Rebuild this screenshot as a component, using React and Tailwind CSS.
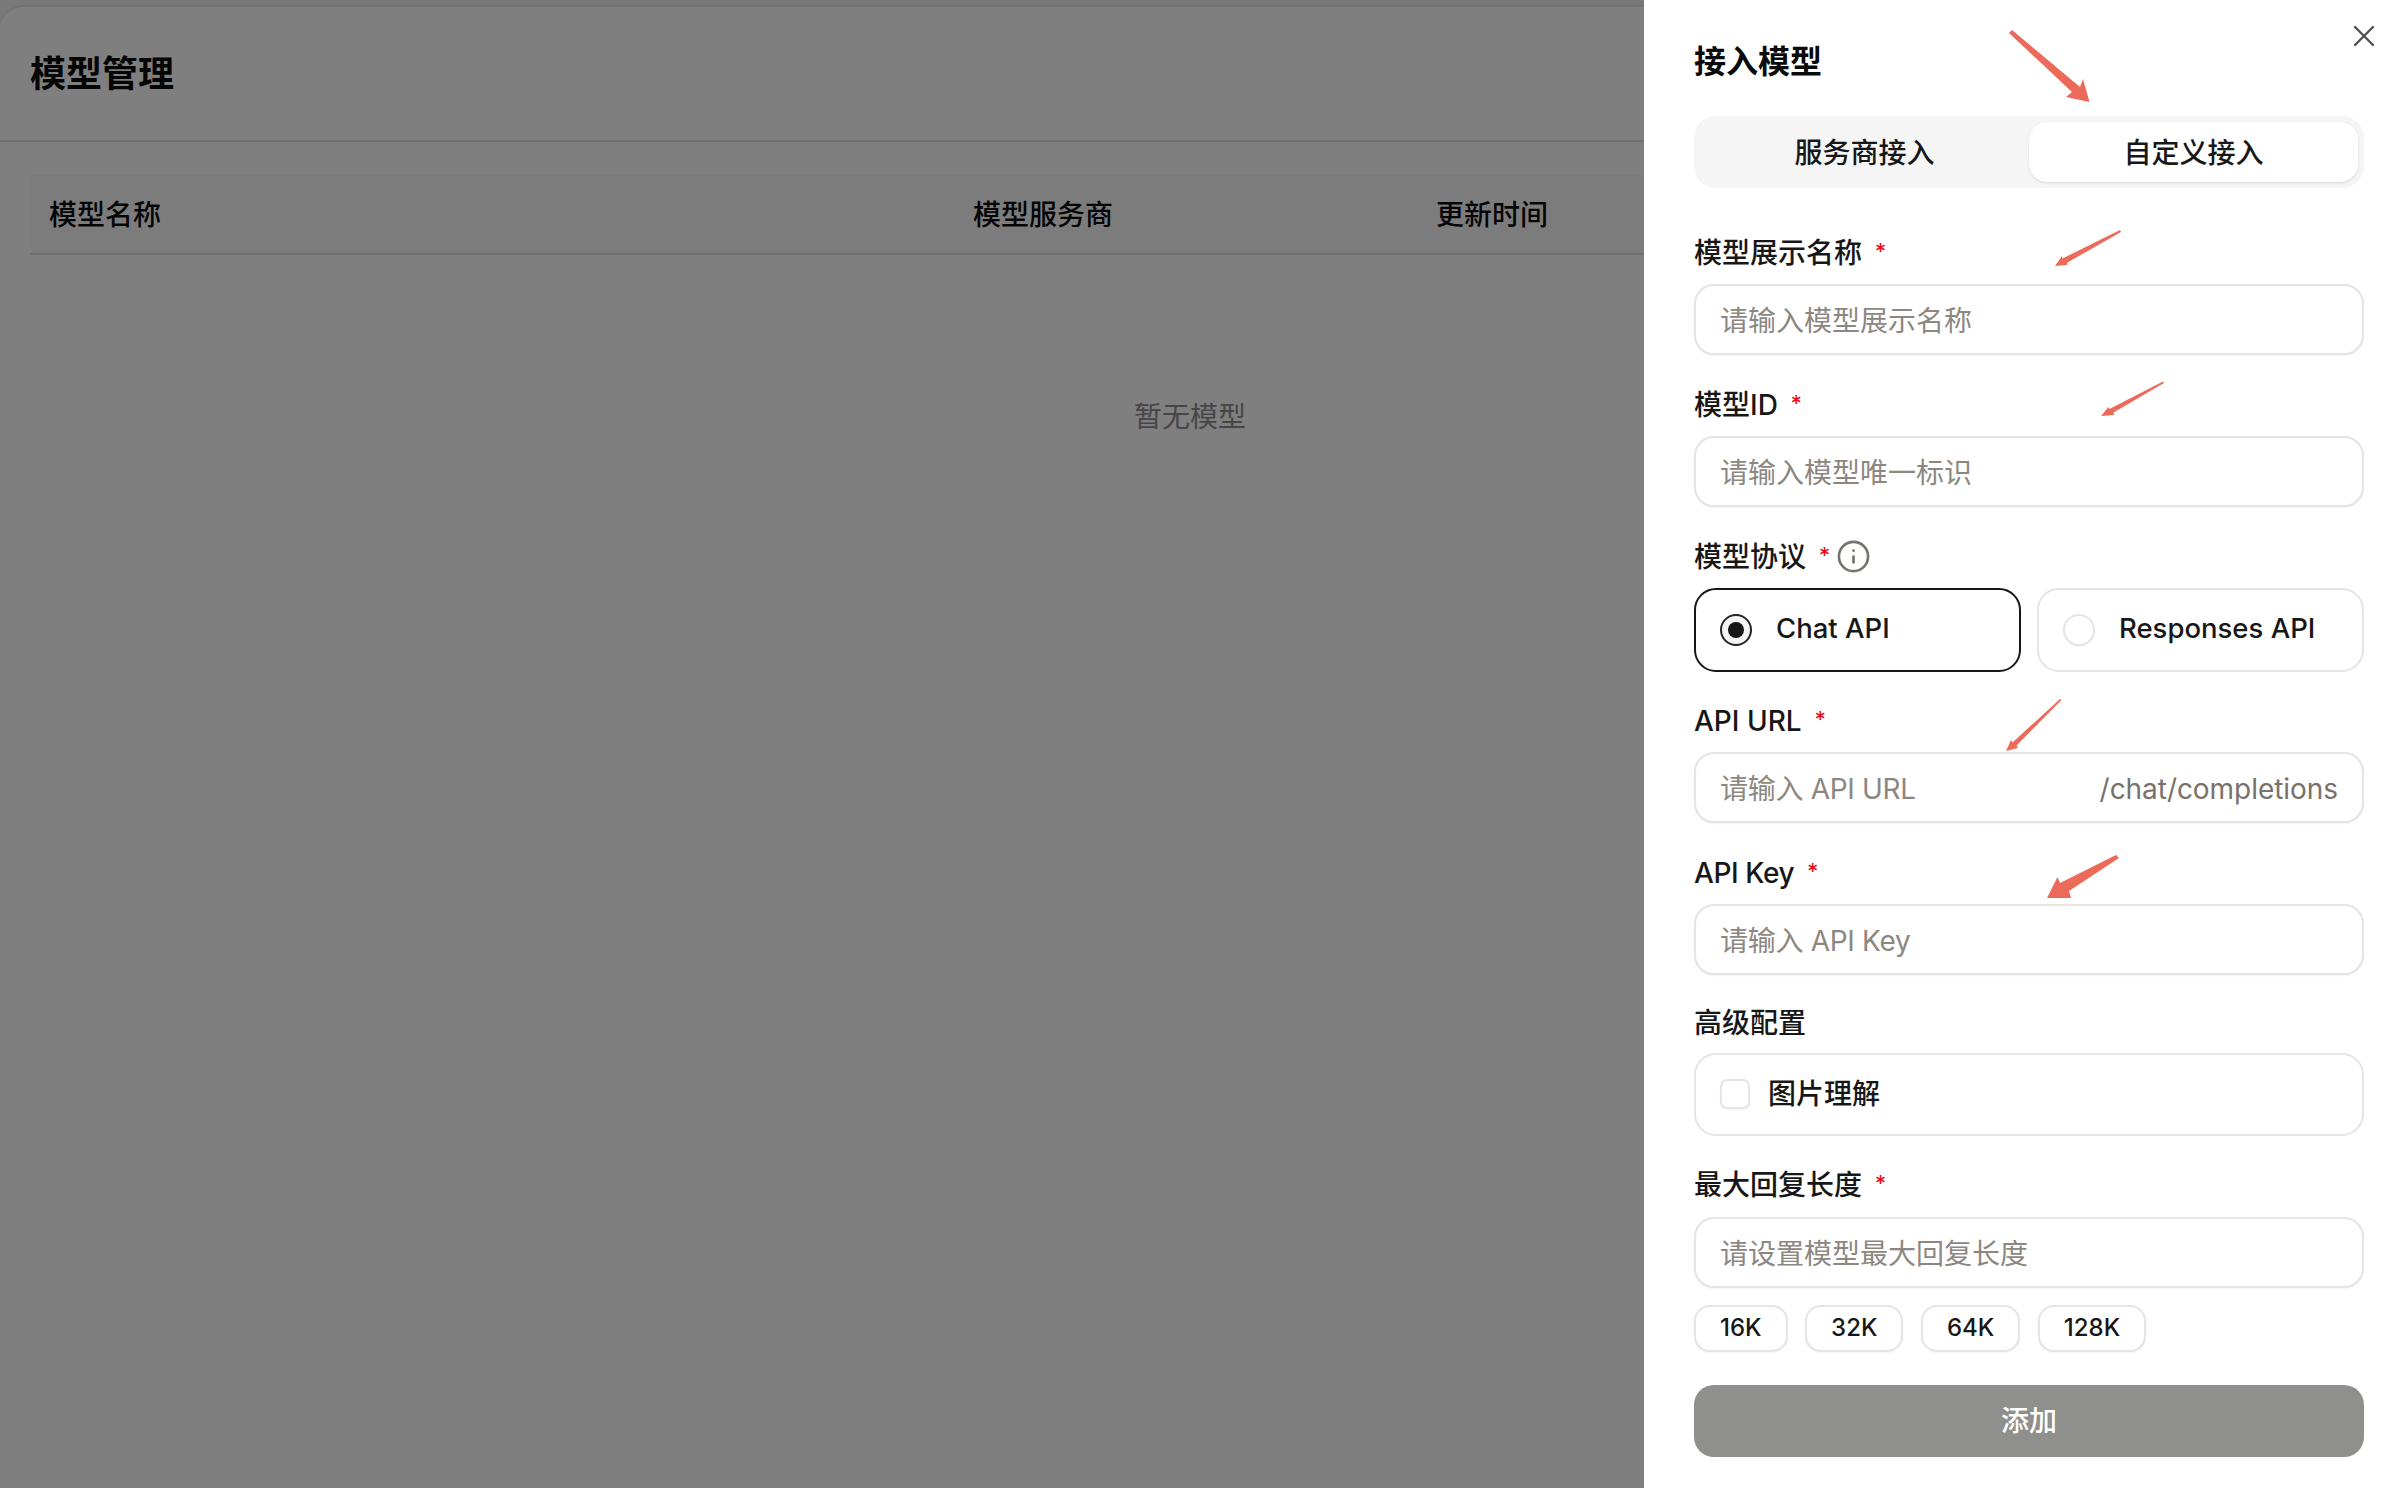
import React from "react";
import { Info, X } from "lucide-react";

const fontStack = "font-['Inter','Noto_Sans_CJK_SC',sans-serif]";

function Star() {
  return <span className="ml-[13px] text-[22px] leading-none text-[#e7000b] font-normal -translate-y-[2px]">*</span>;
}

function Label({ children, required, extra, className = "" }) {
  return (
    <div className={`flex h-10 items-center pt-[1px] text-[28px] font-medium text-[#171717] ${className}`}>
      {children}
      {required && <Star />}
      {extra}
    </div>
  );
}

function TextInput({ placeholder, suffix, tight }) {
  return (
    <div className="mt-3 flex h-[71px] items-center rounded-[20px] border-2 border-[#e5e5e5] bg-white pl-[24px] pr-[24px] pt-[3px] shadow-xs">
      <input
        placeholder={placeholder}
        className={`min-w-0 flex-1 bg-transparent text-[28px] text-[#171717] outline-none placeholder:text-[#8c8781] ${
          tight ? "tracking-[-0.3px]" : ""
        }`}
      />
      {suffix && <span className="text-[28px] tracking-[-0.05px] text-[#78716c]">{suffix}</span>}
    </div>
  );
}

function RadioCard({ label, active }) {
  return (
    <div
      className={`flex h-[84px] flex-1 items-center gap-[24px] rounded-[22px] border-2 bg-white pl-[24px] text-[27.5px] font-medium text-[#171717] ${
        active ? "border-[#171717]" : "border-[#e5e5e5]"
      }`}
    >
      {active ? (
        <span className="flex h-[32px] w-[32px] items-center justify-center rounded-full border-2 border-[#262626] bg-[#f5f5f5]">
          <span className="h-[16px] w-[16px] rounded-full bg-[#171717]" />
        </span>
      ) : (
        <span className="h-[32px] w-[32px] rounded-full border-2 border-[#e5e5e5] bg-white shadow-xs" />
      )}
      <span className="pb-[3px]">{label}</span>
    </div>
  );
}

function Arrows() {
  return (
    <svg className="pointer-events-none absolute inset-0 h-full w-full" viewBox="0 0 2388 1488" fill="#eb6a5a">
      <polygon points="2009,33 2012,30 2080,87 2083,79 2089.5,102 2066,97 2072,92" />
      <polygon points="2120,230 2121,232 2067.5,262.5 2067,265 2055,266 2062,256 2062.5,258.5" />
      <polygon points="2163,381.5 2164,383 2113.5,412.5 2114,415 2101,416 2108.5,407 2109.5,409" />
      <polygon points="2060,699 2061.5,700 2016.5,745.5 2018,748 2006,751 2011,740 2012.5,742.5" />
      <polygon points="2116,855 2119,858 2069,891 2071,898 2047,898 2057.5,877 2060,883" />
    </svg>
  );
}

export default function App() {
  return (
    <div className={`relative h-[1488px] w-[2388px] overflow-hidden bg-[#f3f3f3] pt-[5px] ${fontStack}`}>
      <main className="h-full rounded-tl-[24px] border-t-2 border-[#e5e5e5] bg-white">
        <div className="flex h-[135px] items-center border-b-2 border-[#dedede] pl-[30px] pt-[1px] text-[36px] font-semibold text-[#0a0a0a]">
          模型管理
        </div>
        <div className="px-[30px] pt-[33px]">
          <div className="grid h-[80px] grid-cols-[923px_464px_1fr] items-center border-b-2 border-[#dedede] bg-[#f9f9f9] pt-[2px] text-[28px] font-medium text-[#0a0a0a]">
            <div className="pl-[19px]">模型名称</div>
            <div className="pl-[20px]">模型服务商</div>
            <div className="pl-[19px]">更新时间</div>
          </div>
          <div className="pr-[8px] pt-[141px] text-center text-[28px] text-[#8c8c8c]">暂无模型</div>
        </div>
      </main>

      {/* dimmed backdrop */}
      <div className="absolute inset-0 bg-black/50" />

      {/* drawer */}
      <aside className="absolute inset-y-0 right-0 w-[744px] bg-white pl-[50px] pr-[24px] pt-9">
        <button className="absolute right-[6px] top-[18px] text-[#525252]">
          <X size={36} strokeWidth={1.6} />
        </button>
        <h2 className="h-12 pt-[2px] text-[32px] leading-[48px] font-semibold text-[#0a0a0a]">接入模型</h2>

        <div className="mt-8 flex h-[72px] items-center rounded-[22px] bg-[#f5f5f5] p-[6px] text-[28px] font-medium text-[#171717]">
          <div className="flex-1 pt-[2px] text-center">服务商接入</div>
          <div className="flex h-[60px] w-[329px] items-center justify-center rounded-[18px] bg-white pt-[2px] shadow-sm">自定义接入</div>
        </div>

        <Label required className="mt-[44px]">模型展示名称</Label>
        <TextInput placeholder="请输入模型展示名称" />

        <Label required className="mt-[29px]">模型ID</Label>
        <TextInput placeholder="请输入模型唯一标识" />

        <Label
          required
          className="mt-[29px]"
          extra={<Info size={35} strokeWidth={1.8} className="ml-[6px] text-[#78716c]" />}
        >
          模型协议
        </Label>
        <div className="mt-3 flex gap-[16px]">
          <RadioCard label="Chat API" active />
          <RadioCard label="Responses API" />
        </div>

        <Label required className="mt-[28px]">API URL</Label>
        <TextInput placeholder="请输入 API URL" suffix="/chat/completions" tight />

        <Label required className="mt-[29px] tracking-[-0.4px]">API Key</Label>
        <TextInput placeholder="请输入 API Key" tight />

        <Label className="mt-[27.5px]">高级配置</Label>
        <div className="mt-[10px] flex h-[83px] items-center gap-[18px] rounded-[22px] border-2 border-[#e5e5e5] bg-white pl-[24px] text-[28px] font-medium text-[#171717]">
          <span className="h-[30px] w-[30px] rounded-[7px] border-2 border-[#e5e5e5] bg-white shadow-xs" />
          图片理解
        </div>

        <Label required className="mt-[29px]">最大回复长度</Label>
        <TextInput placeholder="请设置模型最大回复长度" />

        <div className="mt-[17px] flex gap-[17.5px]">
          {["16K", "32K", "64K", "128K"].map((v) => (
            <div
              key={v}
              className="flex h-[47px] items-center rounded-[16px] border-2 border-[#e5e5e5] bg-white px-[24px] text-[24px] font-medium text-[#171717] shadow-xs"
            >
              {v}
            </div>
          ))}
        </div>

        <button className="mt-[33px] h-[72px] w-full rounded-[20px] bg-[#8f8f8d] text-[28px] font-medium text-white">添加</button>
      </aside>

      <Arrows />
    </div>
  );
}
